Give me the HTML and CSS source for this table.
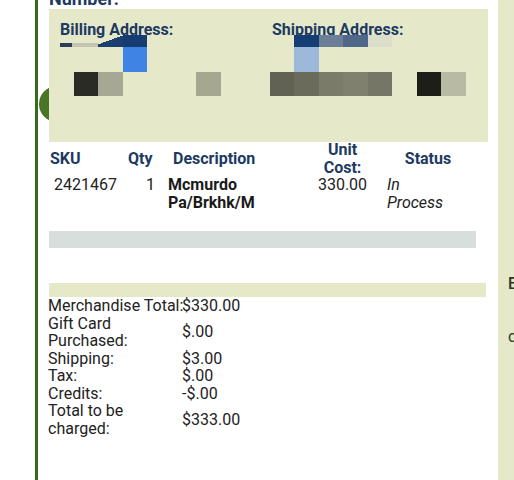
FILE: index.html
```html
<!DOCTYPE html>
<html lang="en">
<head>
<meta charset="utf-8">
<title>Order Detail</title>
<link rel="stylesheet" href="styles.css">
</head>
<body>
<div class="page">
  <div class="gutter"></div>
  <main class="main">
    <div class="badge"></div>
    <h2 class="order-no">Number:</h2>
    <section class="addr">
      <div class="addr-col billing"><h3 class="addr-title">Billing Address:</h3></div>
      <div class="addr-col shipping"><h3 class="addr-title">Shipping Address:</h3></div>
      <div class="mosaic" aria-hidden="true">
        <span class="m b-line"></span>
        <span class="m b-wedge"></span>
        <span class="m b-navy"></span>
        <span class="m b-blue"></span>
        <span class="m b-dark"></span>
        <span class="m b-grey"></span>
        <span class="m b-grey2"></span>
        <span class="m s-navy"></span>
        <span class="m s-slate"></span>
        <span class="m s-steel"></span>
        <span class="m s-faint"></span>
        <span class="m s-sky"></span>
        <span class="m s-g1"></span>
        <span class="m s-g2"></span>
        <span class="m s-g3"></span>
        <span class="m s-g4"></span>
        <span class="m s-g5"></span>
        <span class="m s-black"></span>
        <span class="m s-light"></span>
      </div>
    </section>

    <div class="items">
      <div class="th th-sku">SKU</div>
      <div class="th th-qty">Qty</div>
      <div class="th th-desc">Description</div>
      <div class="th th-cost">Unit<br>Cost:</div>
      <div class="th th-status">Status</div>

      <div class="td td-sku">2421467</div>
      <div class="td td-qty">1</div>
      <div class="td td-desc">Mcmurdo<br>Pa/Brkhk/M</div>
      <div class="td td-cost">330.00</div>
      <div class="td td-status">In<br>Process</div>
    </div>

    <div class="bar-grey"></div>
    <div class="bar-olive"></div>

    <div class="totals">
      <div class="t-label nowrap">Merchandise Total:</div><div class="t-val">$330.00</div>
      <div class="t-label">Gift Card<br>Purchased:</div><div class="t-val">$.00</div>
      <div class="t-label">Shipping:</div><div class="t-val">$3.00</div>
      <div class="t-label">Tax:</div><div class="t-val">$.00</div>
      <div class="t-label">Credits:</div><div class="t-val">-$.00</div>
      <div class="t-label">Total to be<br>charged:</div><div class="t-val">$333.00</div>
    </div>
  </main>
  <aside class="side">
    <p class="side-b">B</p>
    <p class="side-c">c</p>
  </aside>
</div>
</body>
</html>
```

FILE: styles.css
```css
html, body {
  margin: 0;
  padding: 0;
  background: #ffffff;
}

body {
  font-family: Roboto, "Liberation Sans", Arial, sans-serif;
  font-size: 16px;
  line-height: 17.5px;
  color: #222222;
  overflow: hidden;
}

.page {
  display: flex;
  width: 514px;
  height: 480px;
  overflow: hidden;
}

.gutter {
  flex: 0 0 35px;
}

.main {
  position: relative;
  flex: 0 0 auto;
  width: 442px;
  padding: 0 8px 0 10px;
  border-left: 3px solid #386a1c;
  display: flex;
  flex-direction: column;
  align-items: flex-start;
}

.badge {
  position: absolute;
  left: 1px;
  top: 86px;
  width: 36px;
  height: 36px;
  border-radius: 50%;
  background: #4a7526;
  z-index: 0;
}

.order-no {
  margin: -11px 0 0 1px;
  height: 20px;
  font-size: 18px;
  line-height: 20px;
  font-weight: 700;
  color: #1d3a60;
}

.addr {
  position: relative;
  z-index: 1;
  box-sizing: border-box;
  width: 439px;
  height: 133px;
  margin-left: 1px;
  padding: 12px 0 0 11px;
  background: #e5e8c9;
  display: flex;
  overflow: hidden;
}

.addr-col.billing {
  width: 212px;
}

.addr-title {
  margin: 0;
  font-size: 16px;
  line-height: 17.5px;
  font-weight: 700;
  color: #1c3a62;
}

.mosaic {
  position: absolute;
  top: 26px;
  left: 0;
  display: grid;
  grid-template-columns: repeat(18, 24.5px);
  grid-template-rows: 12px 24.5px 24.5px;
}

.m { display: block; }

.b-line  { grid-area: 1 / 1 / 2 / 3; margin: 8px 0 0 11px; background: linear-gradient(90deg, #2b3d5a 0 12px, #c2c4b0 12px); }
.b-wedge { grid-area: 1 / 3; background: linear-gradient(160deg, transparent 45%, #1c3f70 45%); }
.b-navy  { grid-area: 1 / 4; background: #153d72; }
.b-blue  { grid-area: 2 / 4; background: #3f84e4; }
.b-dark  { grid-area: 3 / 2; background: #2a2b24; }
.b-grey  { grid-area: 3 / 3; background: #a7a893; }
.b-grey2 { grid-area: 3 / 7; background: #a6a791; }

.s-navy  { grid-area: 1 / 11; background: #143d73; }
.s-slate { grid-area: 1 / 12; background: #6b7f96; }
.s-steel { grid-area: 1 / 13; background: #4f6789; }
.s-faint { grid-area: 1 / 14; background: #dadecb; }
.s-sky   { grid-area: 2 / 11; background: #9cb9d9; }
.s-g1    { grid-area: 3 / 10; background: #626254; }
.s-g2    { grid-area: 3 / 11; background: #6b6b5b; }
.s-g3    { grid-area: 3 / 12; background: #7a7b69; }
.s-g4    { grid-area: 3 / 13; background: #7f806d; }
.s-g5    { grid-area: 3 / 14; background: #757666; }
.s-black { grid-area: 3 / 16; background: #1d1e18; }
.s-light { grid-area: 3 / 17; background: #b9baa3; }

.items {
  display: grid;
  grid-template-columns: 72px 40px 145px 75px 96px;
  margin-top: -1px;
  position: relative;
  z-index: 1;
}

.th {
  align-self: center;
  font-weight: 700;
  color: #1c3a62;
}

.th-sku { padding-left: 2px; }
.th-qty { padding-left: 8px; }
.th-desc { padding-left: 13px; }
.th-cost { text-align: center; }
.th-status { text-align: center; }

.td { align-self: start; color: #222222; }
.td-sku { padding-left: 6px; }
.td-qty { text-align: right; padding-right: 5px; }
.td-desc { padding-left: 8px; font-weight: 700; color: #1a1a1a; }
.td-cost { text-align: center; }
.td-status { padding-left: 7px; font-style: italic; }

.bar-grey {
  width: 427px;
  height: 17px;
  margin: 20px 0 0 1px;
  background: #d8dedb;
}

.bar-olive {
  width: 437px;
  height: 14px;
  margin: 35px 0 0 1px;
  background: #e5e9c7;
}

.totals {
  display: grid;
  grid-template-columns: 134px auto;
  align-items: center;
  color: #222222;
}

.nowrap { white-space: nowrap; }

.side {
  flex: 1 0 auto;
  margin-left: 0;
  padding: 275px 0 0 10px;
  background: #e5e8c9;
  color: #2b3826;
}

.side p {
  margin: 0;
  font-size: 16px;
  line-height: 17.5px;
}

.side-b { font-weight: 500; }
.side-c { margin-top: 35px !important; }
```
